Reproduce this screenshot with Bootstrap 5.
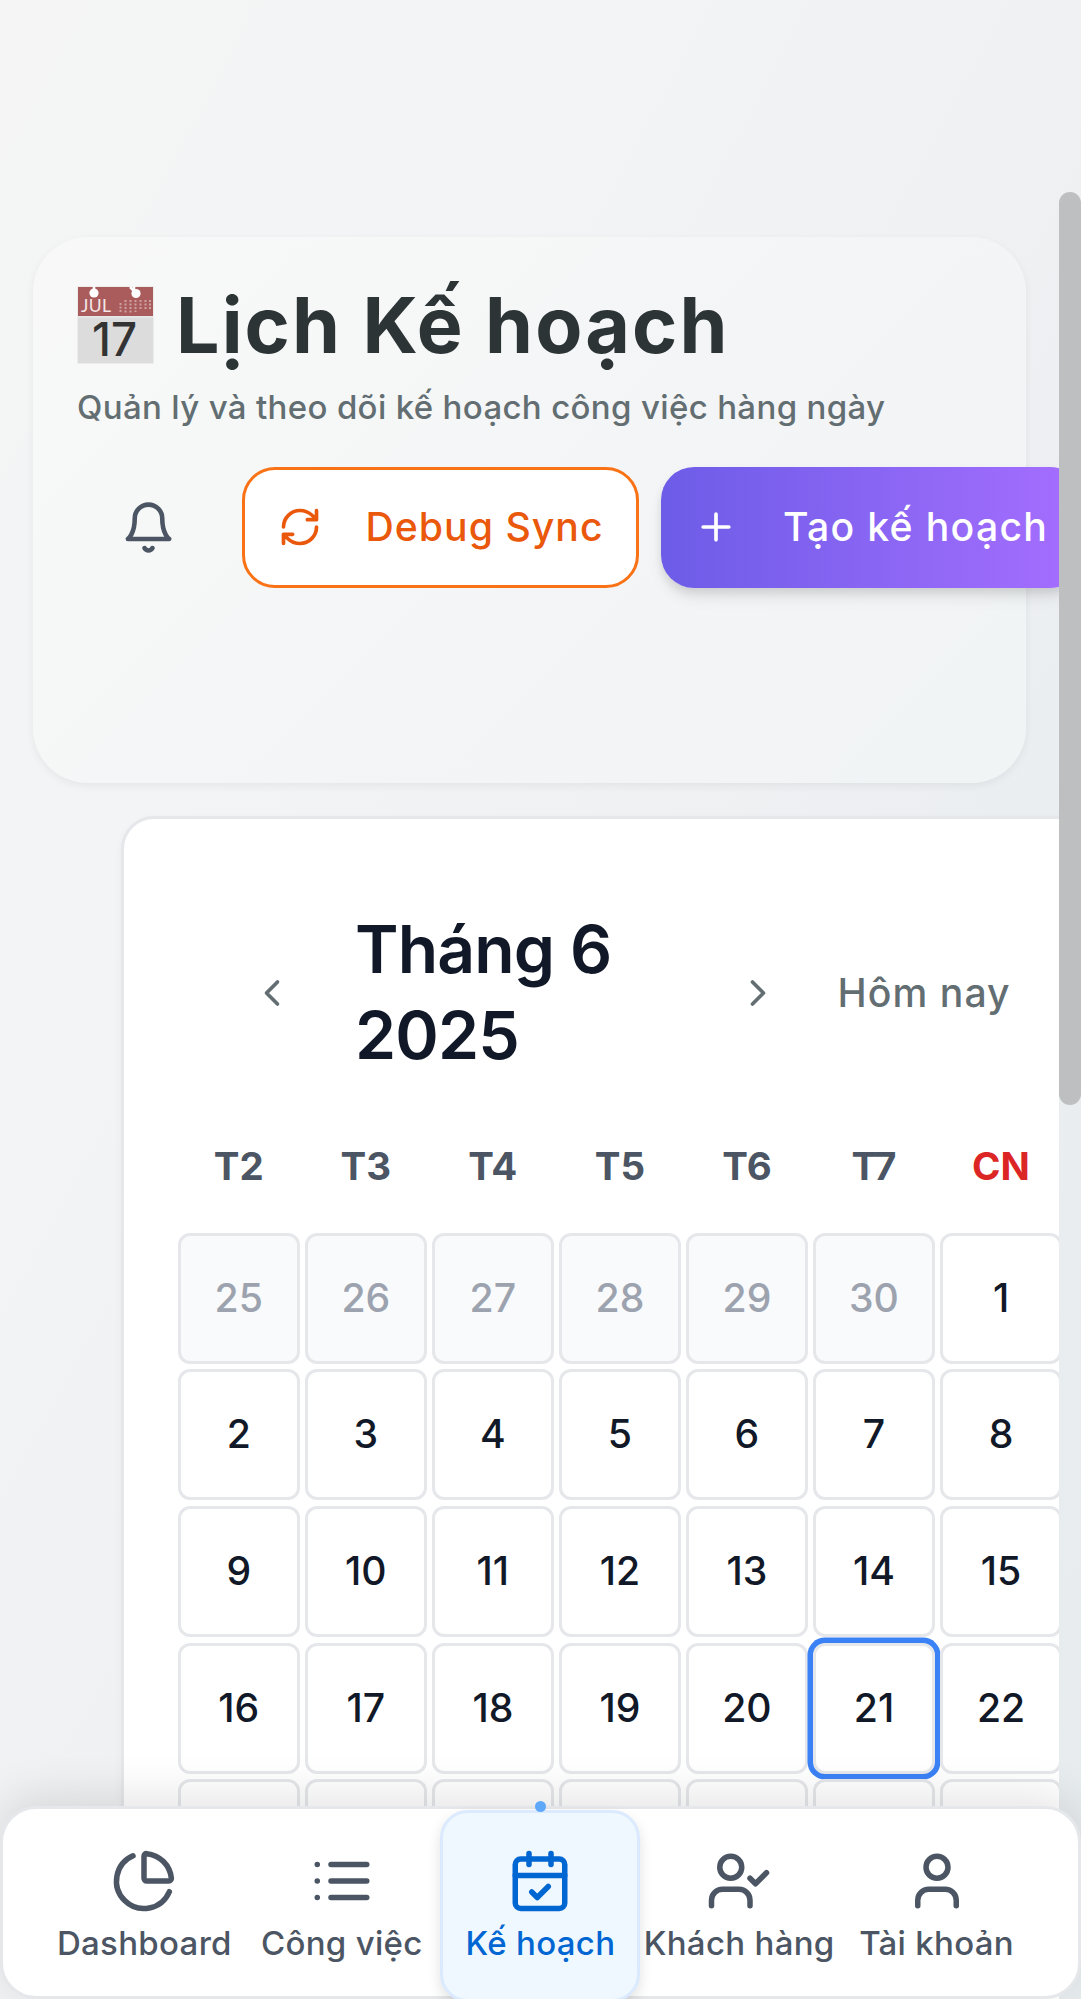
<!DOCTYPE html>
<html lang="vi">
<head>
<meta charset="utf-8">
<meta name="viewport" content="width=device-width, initial-scale=1">
<title>Lịch Kế hoạch</title>
<link href="https://cdn.jsdelivr.net/npm/bootstrap@5.3.0/dist/css/bootstrap.min.css" rel="stylesheet">
<style>
body{font-family:Inter,"Noto Sans",sans-serif;height:1999px;overflow:hidden;color:#111827;background:linear-gradient(to bottom right,#f5f5f5 0%,#f2f4f5 28%,#f0f1f3 50%,#edeff2 60%,#eaeef1 72%,#e6ebee 100%)}
svg{display:block;flex:none}
.ico{fill:none;stroke:currentColor;stroke-width:2;stroke-linecap:round;stroke-linejoin:round}
.viewport{width:1059px;height:1999px;padding-top:237px}
.hero{margin-left:33px;width:993px;height:546px;padding:38px 44px 0;border-radius:55px;background:linear-gradient(135deg,#f8f8f8 0%,#f6f8f7 28%,#f4f5f7 50%,#f3f4f6 78%,#eff4f5 100%);box-shadow:0 3px 8px rgba(0,0,0,.06)}
.hero-title{font-size:77px;line-height:100px;font-weight:700;letter-spacing:2.1px;color:#2d3436}
.hero-title .emoji{margin-right:22px;overflow:visible}
.hero-sub{font-size:33px;line-height:50px;font-weight:500;letter-spacing:.34px;color:#636e72;margin:7px 0 34.500px}
.pill{height:121px;border-radius:33px;font-size:39.2px;font-weight:500;letter-spacing:1.08px;flex:none}
.bell-btn{width:142px;margin-right:23px;color:#4b5563;flex:none}
.pill-sync{width:397px;border:3px solid #f97316;color:#ea580c;padding-left:33px;gap:43.5px;letter-spacing:1.02px}
.pill-new{width:422px;margin-left:22px;color:#fff;background:linear-gradient(90deg,#6c5ce7,#a66eff);box-shadow:0 11px 16px -3px rgba(0,0,0,.1),0 4px 8px rgba(0,0,0,.08);padding-left:33px;gap:45px;letter-spacing:1.3px}
.cal{margin:32.500px 0 0 121px;width:997px;height:1400px;padding:51.5px 54px;background:#fff;border:3px solid #e5e7eb;border-radius:33px;box-shadow:0 3px 8px rgba(0,0,0,.04)}
.cal-bar{height:246px;padding-left:72px;color:#636e72}
.month{width:372px;margin:0 9px 0 61px;font-size:66px;line-height:85.8px;font-weight:600;letter-spacing:-.85px;color:#111827}
.today{font-size:39.2px;font-weight:500;letter-spacing:1.05px;margin-left:57.5px}
.days{display:grid;grid-template-columns:repeat(7,121.5px);column-gap:5.55px;row-gap:5.6px}
.week{font-size:38.5px;font-weight:700;color:#4b5563;height:111px;line-height:46px;padding-top:27px;text-align:center}
.sun{color:#dc2626}
.cell{height:131.1px;border:3px solid #e5e7eb;border-radius:12px;background:#fff;font-size:39.2px;font-weight:500;display:flex;align-items:center;justify-content:center}
.out{background:#f9fafb;color:#9ca3af}
.now{box-shadow:0 0 0 5.5px #3b82f6}
.thumb{right:0;top:192px;width:22px;height:913px;border-radius:11px;background:#bebfc1}
.dock{left:0;bottom:0;width:1081px;height:193px;background:#fff;border:3px solid #e5e7eb;border-radius:36px;box-shadow:0 -11px 44px rgba(0,0,0,.1);padding:1px 0 0 42.7px}
.tab{width:197.4px;height:192px;flex:none;padding-top:37.5px;gap:4.500px;color:#4b5563;font-size:33px;line-height:50px;font-weight:500;letter-spacing:.3px;white-space:nowrap}
.tab-on{width:200px;color:#0066d2;background:#f0f8ff;border:3px solid #dbeafe;border-radius:28px;padding-top:34.5px;box-shadow:0 6px 14px rgba(0,0,0,.12)}
.tab-on::before{content:"";position:absolute;top:-12px;left:91.5px;width:11px;height:11px;border-radius:50%;background:#60a8fa}
</style>
</head>
<body class="position-relative">
<main class="viewport overflow-hidden">
  <header class="hero">
    <h1 class="hero-title d-flex align-items-center mb-0">
      <svg class="emoji" width="77" height="78" viewBox="0 0 77 78">
        <rect x=".5" y=".5" width="76" height="77" fill="#dcdcdc" stroke="#ececec"/>
        <rect x="1" y="1" width="75" height="29" fill="#aa5c5d"/>
        <path d="M0 31h77" stroke="#f0eeee"/>
        <path d="M17 0v6M53 1l6 6M57 0v8" stroke="#fff" stroke-width="2.5"/>
        <circle cx="17" cy="7" r="4.6" fill="#fff"/><circle cx="59" cy="7.5" r="4.6" fill="#fff"/>
        <path d="M43.500 17v10M48.500 14v13M53.500 14v13M58.500 14v12M63.500 14v10M68.500 14v10M73 14v10" stroke="#cda0a1" stroke-width="2" stroke-dasharray="2 1.500"/>
        <text x="4" y="26" font-family="Lato" font-size="17.500" font-weight="400" letter-spacing="0" textLength="30" fill="#f3e7e7">JUL</text>
        <text x="15" y="69.500" font-family="Inter" font-size="46" font-weight="500" letter-spacing="0" textLength="45" lengthAdjust="spacingAndGlyphs" fill="#333">17</text>
      </svg>
      <span>Lịch Kế hoạch</span>
    </h1>
    <p class="hero-sub">Quản lý và theo dõi kế hoạch công việc hàng ngày</p>
    <div class="d-flex align-items-center">
      <div class="bell-btn d-flex justify-content-center">
        <svg class="ico" width="55" height="55" viewBox="0 0 24 24"><path d="M6 8a6 6 0 0 1 12 0c0 7 3 9 3 9H3s3-2 3-9M10.300 21a1.940 1.940 0 0 0 3.400 0"/></svg>
      </div>
      <div class="pill pill-sync d-flex align-items-center bg-white text-nowrap">
        <svg class="ico" width="44" height="44" viewBox="0 0 24 24"><path d="M3 12a9 9 0 0 1 9-9 9.750 9.750 0 0 1 6.740 2.740L21 8M21 3v5h-5M21 12a9 9 0 0 1-9 9 9.750 9.750 0 0 1-6.740-2.740L3 16M8 16H3v5"/></svg>
        <span>Debug Sync</span>
      </div>
      <div class="pill pill-new d-flex align-items-center text-nowrap">
        <svg class="ico" width="44" height="44" viewBox="0 0 24 24"><path d="M5 12h14M12 5v14"/></svg>
        <span>Tạo kế hoạch</span>
      </div>
    </div>
  </header>

  <section class="cal">
    <div class="cal-bar d-flex align-items-center">
      <svg class="ico" width="44" height="44" viewBox="0 0 24 24"><path d="m15 18-6-6 6-6"/></svg>
      <h2 class="month mb-0">Tháng 6<br>2025</h2>
      <svg class="ico" width="44" height="44" viewBox="0 0 24 24"><path d="m9 18 6-6-6-6"/></svg>
      <span class="today text-nowrap">Hôm nay</span>
    </div>
    <div class="days">
      <div class="week">T2</div><div class="week">T3</div><div class="week">T4</div><div class="week">T5</div><div class="week">T6</div><div class="week">T7</div><div class="week sun">CN</div>
      <div class="cell out">25</div><div class="cell out">26</div><div class="cell out">27</div><div class="cell out">28</div><div class="cell out">29</div><div class="cell out">30</div><div class="cell">1</div>
      <div class="cell">2</div><div class="cell">3</div><div class="cell">4</div><div class="cell">5</div><div class="cell">6</div><div class="cell">7</div><div class="cell">8</div>
      <div class="cell">9</div><div class="cell">10</div><div class="cell">11</div><div class="cell">12</div><div class="cell">13</div><div class="cell">14</div><div class="cell">15</div>
      <div class="cell">16</div><div class="cell">17</div><div class="cell">18</div><div class="cell">19</div><div class="cell">20</div><div class="cell now">21</div><div class="cell">22</div>
      <div class="cell"></div><div class="cell"></div><div class="cell"></div><div class="cell"></div><div class="cell"></div><div class="cell"></div><div class="cell"></div>
    </div>
  </section>
</main>

<div class="thumb position-absolute"></div>

<nav class="dock position-absolute d-flex">
  <div class="tab d-flex flex-column align-items-center">
    <svg class="ico" width="66" height="66" viewBox="0 0 24 24"><path d="M21 12c.552 0 1.005-.449.950-.998a10 10 0 0 0-8.953-8.951c-.550-.055-.998.398-.998.950v8a1 1 0 0 0 1 1zM21.210 15.890A10 10 0 1 1 8 2.830"/></svg>
    <span>Dashboard</span>
  </div>
  <div class="tab d-flex flex-column align-items-center">
    <svg class="ico" width="66" height="66" viewBox="0 0 24 24"><path d="M3 6h.010M3 12h.010M3 18h.010M8 6h13M8 12h13M8 18h13"/></svg>
    <span>Công việc</span>
  </div>
  <div class="tab tab-on position-relative d-flex flex-column align-items-center">
    <svg class="ico" width="66" height="66" viewBox="0 0 24 24"><path d="M8 2v4M16 2v4M3 10h18M9 16l2 2 4-4"/><rect x="3" y="4" width="18" height="18" rx="2"/></svg>
    <span>Kế hoạch</span>
  </div>
  <div class="tab d-flex flex-column align-items-center">
    <svg class="ico" width="66" height="66" viewBox="0 0 24 24"><path d="M16 11l2 2 4-4M16 21v-2a4 4 0 0 0-4-4H6a4 4 0 0 0-4 4v2"/><circle cx="9" cy="7" r="4"/></svg>
    <span>Khách hàng</span>
  </div>
  <div class="tab d-flex flex-column align-items-center">
    <svg class="ico" width="66" height="66" viewBox="0 0 24 24"><path d="M19 21v-2a4 4 0 0 0-4-4H9a4 4 0 0 0-4 4v2"/><circle cx="12" cy="7" r="4"/></svg>
    <span>Tài khoản</span>
  </div>
</nav>
<script src="https://cdn.jsdelivr.net/npm/bootstrap@5.3.0/dist/js/bootstrap.bundle.min.js"></script>
</body>
</html>
